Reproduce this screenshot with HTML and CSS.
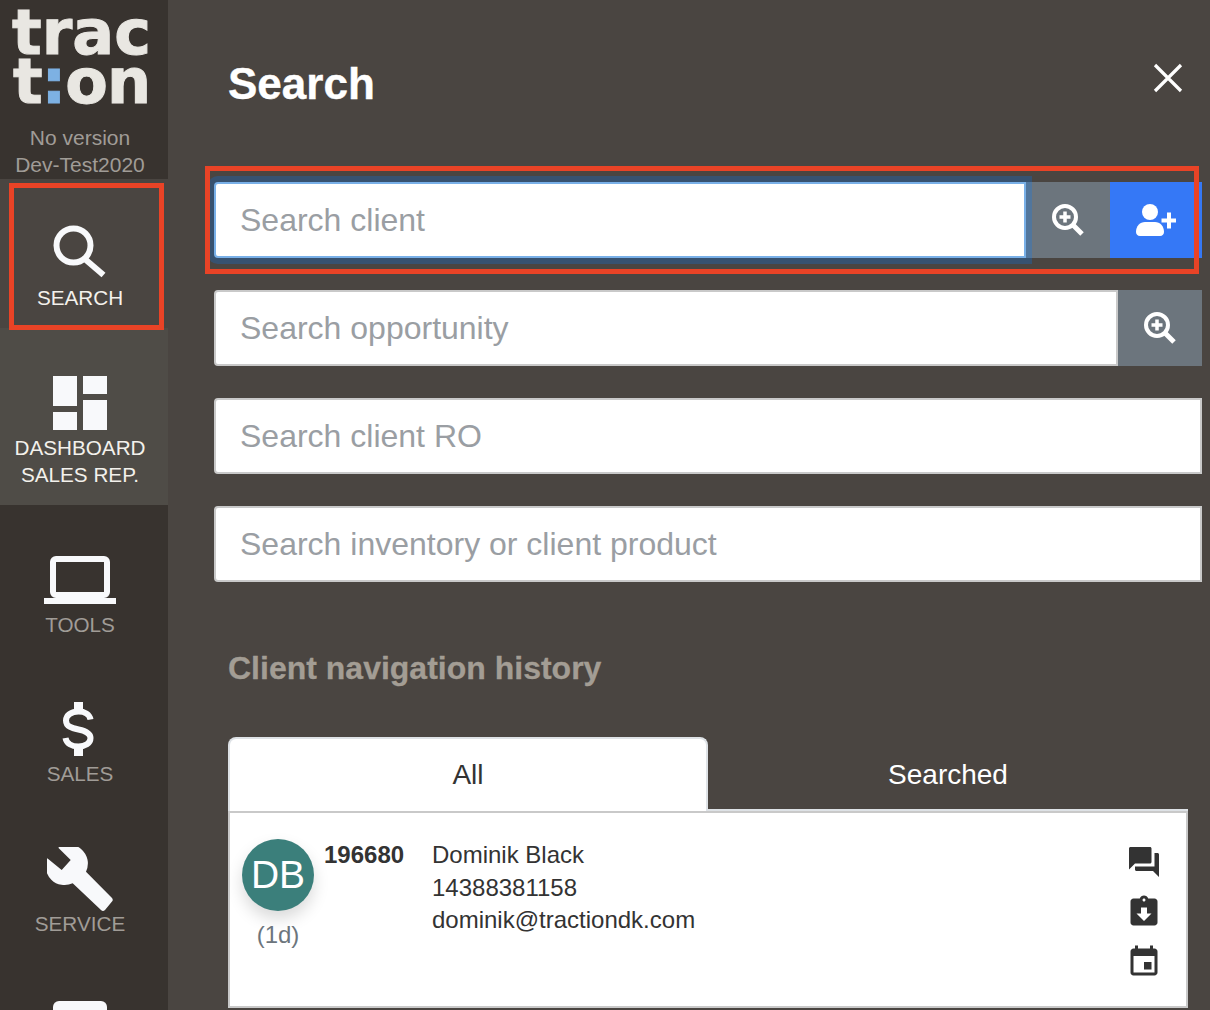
FILE: index.html
```html
<!DOCTYPE html>
<html lang="en">
<head>
<meta charset="utf-8">
<title>Search</title>
<link rel="stylesheet" href="styles.css">
</head>
<body>
<div class="app">
  <nav class="sidebar">
    <div class="brand">
      <div class="logo"><div>trac</div><div class="logo-second">t<span class="colon">:</span>on</div></div>
      <div class="version">No version<br>Dev-Test2020</div>
    </div>
    <a class="item item-search">
      <svg class="icon icon-search" viewBox="0 0 54 54" width="54" height="54"><circle cx="20.500" cy="20.500" r="17" fill="none" stroke="#f8f9fb" stroke-width="6"/><path d="M33 35 50.500 50" fill="none" stroke="#f8f9fb" stroke-width="6"/></svg>
      <span class="label active">SEARCH</span>
      <span class="highlight highlight-nav"></span>
    </a>
    <a class="item item-dash">
      <svg class="icon icon-dash" viewBox="0 0 54 54" width="54" height="54" fill="#f8f9fb"><rect x="0" y="0" width="24" height="30"/><rect x="30" y="0" width="24" height="18"/><rect x="0" y="36" width="24" height="18"/><rect x="30" y="24" width="24" height="30"/></svg>
      <span class="label active">DASHBOARD<br>SALES REP.</span>
    </a>
    <a class="item">
      <svg class="icon icon-tools" viewBox="0 0 72 48" width="72" height="48"><rect x="9" y="3" width="54" height="36" rx="3" fill="none" stroke="#f8f9fb" stroke-width="6"/><rect x="0" y="42" width="72" height="6" fill="#f8f9fb"/></svg>
      <span class="label">TOOLS</span>
    </a>
    <a class="item">
      <svg class="icon icon-sales" viewBox="0 0 32 54" width="32" height="54"><path d="M12 0h9v9h-9zM12 45h9v9h-9z" fill="#f8f9fb"/><path d="M28.500 17.500C27.500 12 22.500 9.500 16.500 9.500 9.500 9.500 4 13 4 18.500 4 24.500 9.500 26 16.500 27.500 23.500 29 28.500 31 28.500 36 28.500 41.500 23 44.500 16.500 44.500 9.500 44.500 4.500 41.500 3.500 36" fill="none" stroke="#f8f9fb" stroke-width="6"/></svg>
      <span class="label">SALES</span>
    </a>
    <a class="item">
      <svg class="icon icon-service" viewBox="0 0 66 65" width="66" height="65"><path d="M.3 11.300 14.700 23 23.700 13 11.300 .7A19 19 0 0 1 39 24.700L65 51Q66.500 53 65 54.500L58 63Q56 65 54 63L25.700 36.300A19 19 0 0 1 .3 11.300Z" fill="#f8f9fb"/></svg>
      <span class="label">SERVICE</span>
    </a>
    <a class="item item-last"><span class="icon-last"></span></a>
  </nav>

  <main class="panel">
    <header class="head">
      <h1 class="title">Search</h1>
      <svg class="close" viewBox="0 0 30 30" width="30" height="30"><path d="M2 2 28 28M28 2 2 28" stroke="#fff" stroke-width="3.200" fill="none"/></svg>
    </header>

    <div class="fields">
      <div class="row">
        <input class="field field-focus" placeholder="Search client">
        <button class="btn btn-grey" type="button">
          <svg viewBox="0 0 32 32" width="32" height="32"><circle cx="13" cy="13" r="11" fill="none" stroke="#fff" stroke-width="4"/><path d="M7.500 13h11M13 7.500v11" stroke="#fff" stroke-width="3.500"/><path d="M21.500 21.500 30 30" stroke="#fff" stroke-width="5"/></svg>
        </button>
        <button class="btn btn-blue" type="button">
          <svg viewBox="0 0 40 32" width="40" height="32" fill="#fff"><circle cx="14" cy="8" r="8"/><path d="M0 28c0-6 4-10 9-10h10c5 0 9 4 9 10 0 2-1.500 4-4 4H4c-2.500 0-4-2-4-4Z"/><path d="M31 8.500h4v6h5.500v4H35v6h-4v-6h-5.500v-4H31Z"/></svg>
        </button>
        <span class="highlight highlight-row"></span>
      </div>
      <div class="row">
        <input class="field" placeholder="Search opportunity">
        <button class="btn btn-grey" type="button">
          <svg viewBox="0 0 32 32" width="32" height="32"><circle cx="13" cy="13" r="11" fill="none" stroke="#fff" stroke-width="4"/><path d="M7.500 13h11M13 7.500v11" stroke="#fff" stroke-width="3.500"/><path d="M21.500 21.500 30 30" stroke="#fff" stroke-width="5"/></svg>
        </button>
      </div>
      <div class="row"><input class="field" placeholder="Search client RO"></div>
      <div class="row"><input class="field" placeholder="Search inventory or client product"></div>
    </div>

    <section class="history">
      <h2 class="history-title">Client navigation history</h2>
      <div class="tabs">
        <div class="tab tab-on">All</div>
        <div class="tab">Searched</div>
      </div>
      <div class="list">
        <div class="client">
          <div class="who">
            <div class="avatar">DB</div>
            <div class="age">(1d)</div>
          </div>
          <div class="id">196680</div>
          <div class="details">
            <div>Dominik Black</div>
            <div>14388381158</div>
            <div>dominik@tractiondk.com</div>
          </div>
          <div class="actions">
            <svg viewBox="0 0 24 24" width="36" height="36" fill="#333"><path d="M21 6h-2v9H6v2c0 .55.45 1 1 1h11l4 4V7c0-.55-.45-1-1-1zm-4 6V3c0-.55-.45-1-1-1H3c-.55 0-1 .45-1 1v14l4-4h10c.55 0 1-.45 1-1z"/></svg>
            <svg viewBox="0 0 24 24" width="36" height="36" fill="#333"><path d="M19 3h-4.180C14.400 1.840 13.300 1 12 1c-1.300 0-2.400.84-2.820 2H5c-1.100 0-2 .9-2 2v14c0 1.100.9 2 2 2h14c1.100 0 2-.9 2-2V5c0-1.100-.9-2-2-2zm-7 0c.55 0 1 .45 1 1s-.45 1-1 1-1-.45-1-1 .45-1 1-1zm0 15l-5-5h3V9h4v4h3l-5 5z"/></svg>
            <svg viewBox="0 0 24 24" width="36" height="36" fill="#333"><path d="M17 12h-5v5h5v-5zM16 1v2H8V1H6v2H5c-1.110 0-1.990.9-1.990 2L3 19c0 1.100.89 2 2 2h14c1.100 0 2-.9 2-2V5c0-1.100-.9-2-2-2h-1V1h-2zm3 18H5V8h14v11z"/></svg>
          </div>
        </div>
      </div>
    </section>
  </main>
</div>
</body>
</html>
```
FILE: styles.css
```css
* { box-sizing: border-box; }
html, body { margin: 0; height: 100%; }
body { font-family: "Liberation Sans", Arial, sans-serif; background: #4a4541; overflow: hidden; }
.app { display: flex; height: 1010px; overflow: hidden; }

.sidebar { width: 168px; flex: none; background: #38332f; display: flex; flex-direction: column; overflow: hidden; }
.brand { height: 179px; flex: none; text-align: center; padding: 2px 8px 0 0; }
.logo { font-family: "DejaVu Sans", sans-serif; font-weight: 700; font-size: 62px; line-height: 49px; color: #e9e7e2; -webkit-text-stroke: 1px #e9e7e2; height: 107px; padding-top: 6px; margin-left: 3px; }
.logo-second { letter-spacing: -1px; }
.colon { color: #7db1e3; -webkit-text-stroke: 1px #7db1e3; }
.version { font-size: 21px; line-height: 27px; color: #a09c97; margin-top: 15px; }

.item { position: relative; height: 149.5px; flex: none; display: flex; flex-direction: column; align-items: center; justify-content: flex-end; padding: 0 8px 17px 0; }
.item-search { height: 149px; background: #4a4541; padding-bottom: 17.5px; }
.item-dash { height: 177px; background: #4f4c47; padding-bottom: 17.5px; }
.label { font-size: 20.7px; line-height: 27px; text-align: center; color: #a09c97; }
.label.active { color: #f3f1ec; }
.icon { display: block; flex: none; }
.icon-search { margin-bottom: 5px; }
.icon-dash { margin-bottom: 4px; }
.icon-tools { margin-bottom: 7px; }
.icon-sales { margin: 0 4px 4px 0; }
.icon-service { margin-bottom: -2px; }
.item-last { justify-content: flex-start; padding-top: 47px; }
.icon-last { display: block; width: 54px; height: 60px; background: #f8f9fb; border-radius: 6px; }

.highlight { position: absolute; border: 5px solid #e94326; pointer-events: none; z-index: 3; }
.highlight-nav { left: 9px; width: 155px; top: 4px; height: 147px; }
.highlight-row { left: -9px; right: 3px; top: -16px; bottom: -16px; }

.panel { flex: 1; min-width: 0; padding: 0 8px 0 46px; display: flex; flex-direction: column; }
.head { height: 166px; flex: none; position: relative; padding-left: 14px; padding-top: 57px; }
.title { margin: 0; font-size: 44px; line-height: 54px; font-weight: 700; color: #fff; -webkit-text-stroke: .4px #fff; }
.close { position: absolute; right: 19px; top: 63px; }

.fields { display: flex; flex-direction: column; gap: 32px; padding-top: 16px; flex: none; }
.row { position: relative; display: flex; height: 76px; }
.field { flex: 1; min-width: 0; height: 76px; border: 2px solid #c9c9c9; border-radius: 4px 0 0 4px; background: #fff; padding: 0 24px; font: 32px "Liberation Sans", Arial, sans-serif; color: #333; outline: none; }
.field::placeholder { color: #9a9ea3; opacity: 1; }
.field-focus { position: relative; z-index: 1; border-color: #79b0e8; box-shadow: 0 0 0 6px rgba(0, 123, 255, .25); }
.btn { flex: none; height: 76px; border: 0; padding: 0; display: flex; align-items: center; justify-content: center; }
.btn-grey { width: 84px; background: #6c757d; }
.btn-blue { width: 92px; background: #3578f6; }

.history { flex: none; padding-left: 14px; padding-right: 14px; }
.history-title { margin: 64px 0 47px; font-size: 32px; line-height: 44px; font-weight: 700; color: #a39d94; -webkit-text-stroke: .3px #a39d94; }
.tabs { display: flex; height: 74px; border-bottom: 2px solid #dee2e6; }
.tab { width: 50%; flex: none; display: flex; align-items: center; justify-content: center; padding-top: 4px; font-size: 28px; color: #fff; }
.tab-on { background: #fff; color: #333; border: 2px solid #dee2e6; border-bottom: 0; border-radius: 8px 8px 0 0; height: 74px; padding-top: 0; }
.list { background: #fff; border: 2px solid #c9c9c9; border-bottom: 0; }
.client { display: flex; height: 195px; border-bottom: 2px solid #c9c9c9; padding: 26px 24px 0 12px; font-size: 24px; line-height: 32.5px; color: #333; position: relative; }
.who { width: 72px; flex: none; text-align: center; }
.avatar { width: 72px; height: 72px; border-radius: 50%; background: #3b7f7b; color: #fff; font-size: 39px; display: flex; align-items: center; justify-content: center; box-shadow: 0 8px 16px rgba(0, 0, 0, .15); }
.age { color: #6c757d; margin-top: 8px; }
.id { width: 108px; margin-left: 10px; font-weight: 700; flex: none; }
.details { flex: 1; }
.actions { width: 36px; display: flex; flex-direction: column; gap: 14px; margin-top: 5px; flex: none; }
.actions svg { display: block; }
```
